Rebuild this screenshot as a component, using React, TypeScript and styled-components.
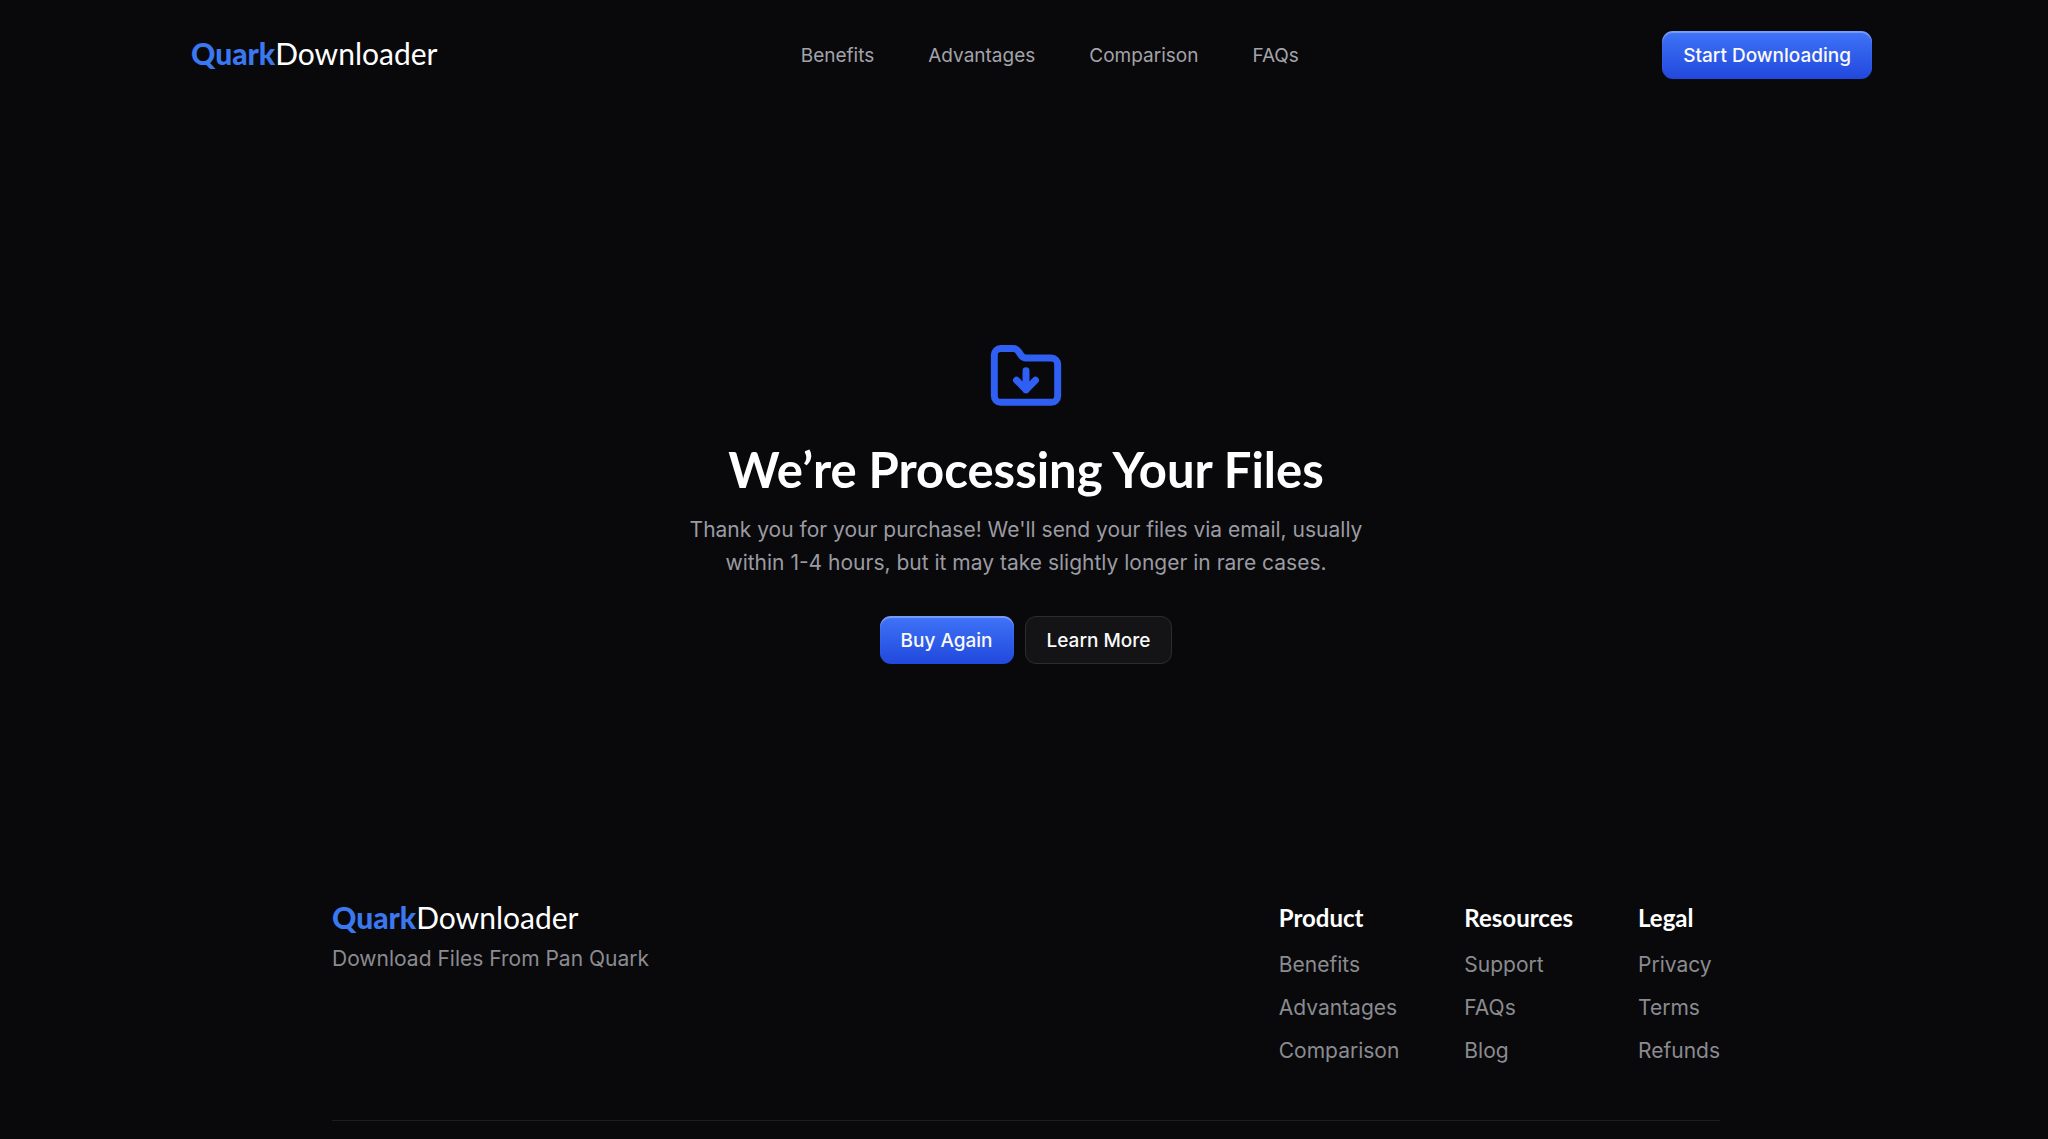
import React from "react";
import styled, { createGlobalStyle } from "styled-components";
import { FolderDown } from "lucide-react";

const GlobalStyle = createGlobalStyle`
  *, *::before, *::after { box-sizing: border-box; }
  body {
    margin: 0;
    background: #09090b;
    color: #fafafa;
    font-family: Inter, "Liberation Sans", sans-serif;
    overflow-x: hidden;
  }
  h1, h2, p, ul { margin: 0; padding: 0; }
  ul { list-style: none; }
  a { color: inherit; text-decoration: none; }
`;

const Page = styled.div`
  display: flex;
  flex-direction: column;
  padding-left: 4px;
`;

const Header = styled.header`
  display: flex;
  align-items: center;
  justify-content: space-between;
  width: 100%;
  max-width: 1692px;
  margin: 0 auto;
  padding: 31px 0 31px 11px;
`;

const LogoLink = styled.a`
  display: block;
  padding-bottom: 4px;
  font-family: Lato, Inter, sans-serif;
  font-size: 30px;
  line-height: 36px;
  font-weight: 400;
  color: #ffffff;
`;

const LogoAccent = styled.span`
  font-weight: 900;
  color: #3b78f0;
`;

const Nav = styled.nav`
  display: flex;
  gap: 54px;
`;

const NavLink = styled.a`
  padding-top: 1px;
  font-size: 19px;
  line-height: 28px;
  font-weight: 400;
  color: #a3a3aa;
`;

const Button = styled.button<{ $primary?: boolean }>`
  height: 48px;
  padding: 1px 21px 0;
  border-radius: 11px;
  font: 500 19px/28px Inter, sans-serif;
  white-space: nowrap;
  cursor: pointer;
  color: #fafafa;
  border: ${(p) => (p.$primary ? "0" : "1px solid #2c2c30")};
  background: ${(p) => (p.$primary ? "linear-gradient(#3f74f8, #2148dc)" : "#141416")};
  box-shadow: ${(p) => (p.$primary ? "inset 0 2px 1px rgba(255, 255, 255, 0.3)" : "none")};
`;

const Hero = styled.main`
  display: flex;
  flex-direction: column;
  align-items: center;
  padding: 229px 24px 235px;
  text-align: center;
`;

const Title = styled.h1`
  margin-top: 26px;
  font-family: Lato, Inter, sans-serif;
  font-size: 49px;
  line-height: 56px;
  font-weight: 700;
  color: #ffffff;
`;

const Lead = styled.p`
  max-width: 700px;
  margin-top: 16px;
  font-size: 21px;
  line-height: 33px;
  color: #9b9ba2;
`;

const Actions = styled.div`
  display: flex;
  gap: 11px;
  margin-top: 37px;
`;

const Footer = styled.footer`
  width: 100%;
  max-width: 1388px;
  margin: 0 auto;
`;

const FooterMain = styled.div`
  display: flex;
  justify-content: space-between;
  padding-bottom: 53px;
  border-bottom: 1px solid #1e1e21;
`;

const Tagline = styled.p`
  margin-top: 4px;
  font-size: 21px;
  line-height: 32px;
  color: #8b8b90;
`;

const Columns = styled.div`
  display: flex;
  gap: 65px;
  padding-top: 3px;
`;

const ColumnTitle = styled.h2`
  font-family: Lato, Inter, sans-serif;
  font-size: 24px;
  line-height: 32px;
  font-weight: 700;
  color: #ffffff;
`;

const LinkList = styled.ul`
  display: flex;
  flex-direction: column;
  gap: 11px;
  margin-top: 15px;
`;

const FooterLink = styled.a`
  display: block;
  font-size: 21px;
  line-height: 32px;
  color: #8b8b90;
`;

const navItems = ["Benefits", "Advantages", "Comparison", "FAQs"];

const footerColumns = [
  { title: "Product", links: ["Benefits", "Advantages", "Comparison"] },
  { title: "Resources", links: ["Support", "FAQs", "Blog"] },
  { title: "Legal", links: ["Privacy", "Terms", "Refunds"] },
];

const Logo = () => (
  <LogoLink href="#">
    <LogoAccent>Quark</LogoAccent>Downloader
  </LogoLink>
);

export default function App() {
  return (
    <>
      <GlobalStyle />
      <Page>
        <Header>
          <Logo />
          <Nav aria-label="Main">
            {navItems.map((item) => (
              <NavLink key={item} href={`#${item.toLowerCase()}`}>{item}</NavLink>
            ))}
          </Nav>
          <Button type="button" $primary>Start Downloading</Button>
        </Header>
        <Hero>
          <FolderDown size={76} color="#2f5ff3" strokeWidth={2.2} aria-hidden="true" />
          <Title>We’re Processing Your Files</Title>
          <Lead>
            Thank you for your purchase! We'll send your files via email, usually within 1-4 hours, but it may take slightly longer in rare cases.
          </Lead>
          <Actions>
            <Button type="button" $primary>Buy Again</Button>
            <Button type="button">Learn More</Button>
          </Actions>
        </Hero>
        <Footer>
          <FooterMain>
            <div>
              <Logo />
              <Tagline>Download Files From Pan Quark</Tagline>
            </div>
            <Columns>
              {footerColumns.map((column) => (
                <div key={column.title}>
                  <ColumnTitle>{column.title}</ColumnTitle>
                  <LinkList>
                    {column.links.map((link) => (
                      <li key={link}>
                        <FooterLink href={`#${link.toLowerCase()}`}>{link}</FooterLink>
                      </li>
                    ))}
                  </LinkList>
                </div>
              ))}
            </Columns>
          </FooterMain>
        </Footer>
      </Page>
    </>
  );
}
